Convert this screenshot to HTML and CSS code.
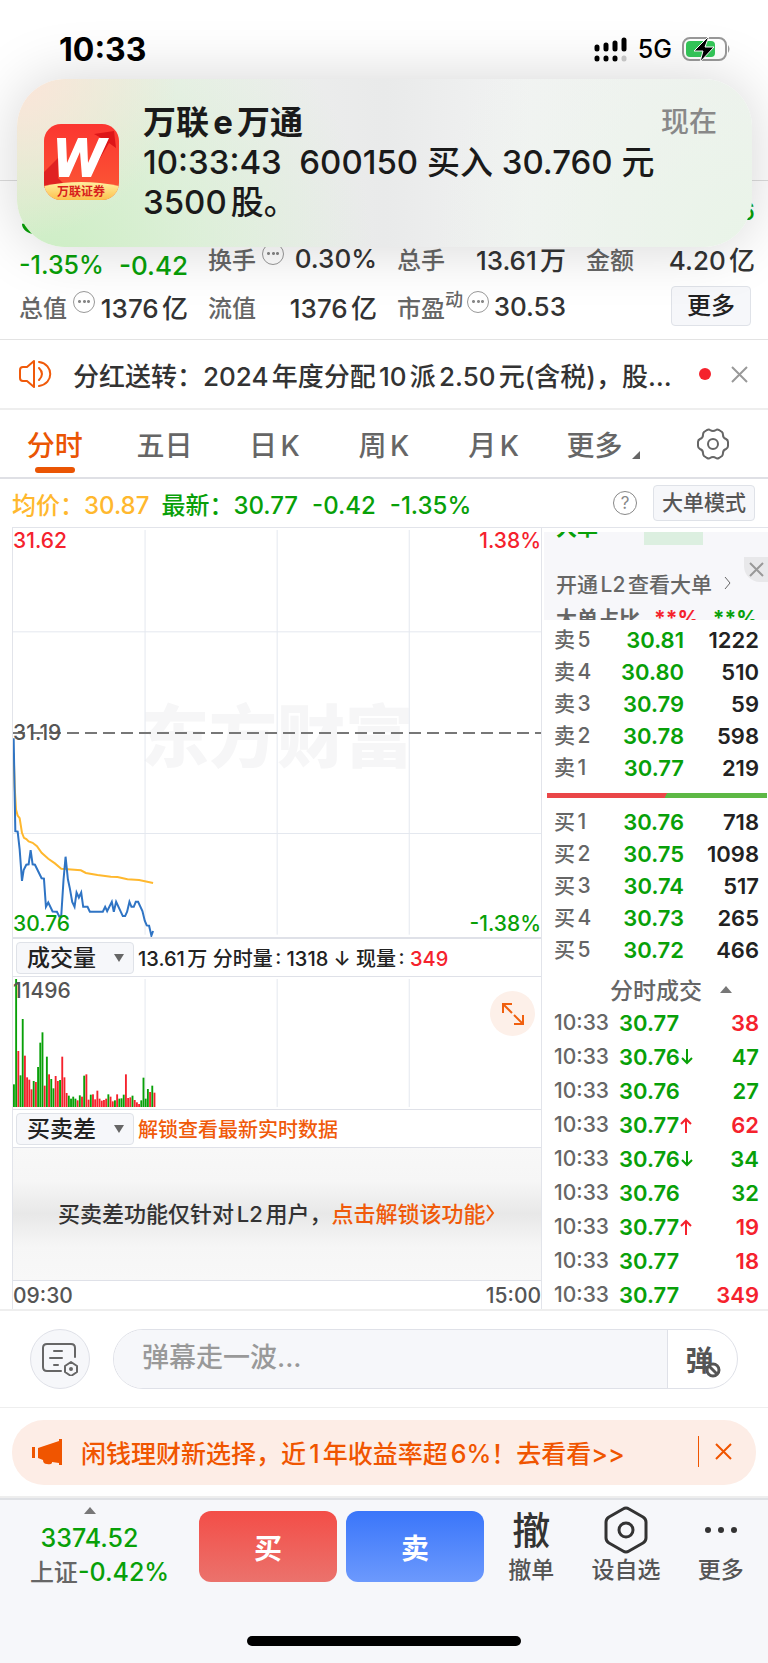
FILE: index.html
```html
<!DOCTYPE html>
<html lang="zh-CN">
<head>
    <meta charset="UTF-8">
    <meta name="viewport" content="width=device-width, initial-scale=1.0">
    <title>分时行情</title>
    <link rel="stylesheet" href="styles.css">
</head>
<body>
    <header class="top">
        <div class="status">
            <span class="clock">10:33</span>
            <span class="status-right">
                <svg width="34" height="26" viewBox="0 0 34 26">
                    <g stroke="#000" stroke-width="5" stroke-linecap="round">
                        <path d="M3 11v2M12 9v4M21 7v6M30 4v9M3 22v1M12 22v1M21 22v1"/>
                        <path d="M30 22v1" stroke="#ccc"/>
                    </g>
                </svg>
                <span class="net">5G</span>
                <svg width="50" height="28" viewBox="0 0 50 28">
                    <rect x="1" y="3" width="43" height="22" rx="7" fill="#fff" stroke="#999" stroke-width="2"/>
                    <rect x="4" y="6" width="29" height="16" rx="4" fill="#34c759"/>
                    <path d="M46 10q3 4 0 8z" fill="#999"/>
                    <path d="M27 1L12 16h9l-3 11 14-15h-9z" fill="#000" stroke="#fff" stroke-width="1"/>
                </svg>
            </span>
        </div>
    </header>

    <section class="notification">
        <svg class="app-icon" width="75" height="76" viewBox="0 0 75 76">
            <defs>
                <linearGradient id="appRed" x1="0" y1="0" x2="0" y2="1">
                    <stop offset="0" stop-color="#fb3530"/>
                    <stop offset="1" stop-color="#fb5a35"/>
                </linearGradient>
                <linearGradient id="appGold" x1="0" y1="0" x2="0" y2="1">
                    <stop offset="0" stop-color="#fff0a0"/>
                    <stop offset="1" stop-color="#fcc04c"/>
                </linearGradient>
                <clipPath id="appClip"><rect width="75" height="76" rx="17"/></clipPath>
            </defs>
            <g clip-path="url(#appClip)">
                <rect width="75" height="76" fill="url(#appRed)"/>
                <path d="M0 48l14-14v20l10 10H0z" fill="#e02222"/>
                <path d="M50 10l20-3 2 17-7-5-20 34-6-4 20-34z" fill="#dd1518"/>
                <path d="M13 14h9l1 25 11-25h9l1 25 11-25h10L47 53h-9l-2-25-11 25h-10z" fill="#fff"/>
                <path d="M0 62q37-8 75 0v14H0z" fill="url(#appGold)"/>
                <text x="37" y="72" text-anchor="middle" class="app-name">万联证券</text>
            </g>
        </svg>
        <div class="note-body">
            <div class="note-head"><strong>万联e万通</strong><time>现在</time></div>
            <p>10:33:43&nbsp; 600150 买入 30.760 元 3500股。</p>
        </div>
    </section>

    <main>
        <section class="summary">
            <div class="price-row"><span class="big-price">30.77</span><span class="side-price">30.76</span></div>
            <div class="stats">
                <div class="stat green change"><span>-1.35%</span><b>-0.42</b></div>
                <div class="stat first"><span>换手<i class="more-dot"></i></span><b>0.30%</b></div>
                <div class="stat first"><span>总手</span><b>13.61万</b></div>
                <div class="stat first"><span>金额</span><b>4.20亿</b></div>
                <div class="stat"><span>总值<i class="more-dot"></i></span><b>1376亿</b></div>
                <div class="stat"><span>流值</span><b>1376亿</b></div>
                <div class="stat"><span>市盈<sup>动</sup><i class="more-dot tight"></i></span><b>30.53</b></div>
                <div class="stat end"><button class="box-btn big">更多</button></div>
            </div>
        </section>

        <section class="notice">
            <svg width="34" height="28" viewBox="0 0 34 28" fill="none" stroke="#f05a0a" stroke-width="2" stroke-linejoin="round" stroke-linecap="round">
                <path d="M15 1L8 7H4Q1 7 1 10v8q0 3 3 3h4l7 6z"/>
                <path d="M20 8q6 6 0 12M20 2c15 2 15 22 0 24"/>
            </svg>
            <a href="#">分红送转：2024年度分配10派2.50元(含税)，股…</a>
            <span class="red-dot"></span>
            <button class="icon-btn" aria-label="关闭">
                <svg width="17" height="17" viewBox="0 0 17 17" stroke="#999" stroke-width="2"><path d="M1 1l15 15M16 1L1 16"/></svg>
            </button>
        </section>

        <nav class="tabs">
            <a href="#" class="active">分时</a>
            <a href="#">五日</a>
            <a href="#">日K</a>
            <a href="#">周K</a>
            <a href="#">月K</a>
            <a href="#" class="with-corner">更多<i class="corner"></i></a>
            <a href="#" aria-label="设置">
                <svg width="34" height="32" viewBox="0 0 34 32" fill="none" stroke="#666" stroke-width="2" stroke-linejoin="round">
                    <path d="M11 2q2-1 3 0 3 2 6 0 1-1 3 0l3 2q1 1 1 3 0 3 3 4 2 1 2 3v4q0 2-2 3-3 1-3 4 0 2-1 3l-3 2q-2 1-3 0-3-2-6 0-1 1-3 0l-3-2q-1-1-1-3 0-3-3-4-2-1-2-3v-4q0-2 2-3 3-1 3-4 0-2 1-3z"/>
                    <circle cx="17" cy="16" r="5"/>
                </svg>
            </a>
        </nav>

        <div class="quote-line">
            <span class="avg">均价：30.87</span>
            <span class="green last">最新：30.77<span>-0.42</span><span>-1.35%</span></span>
            <span class="help">?</span>
            <button class="box-btn">大单模式</button>
        </div>

        <div class="board">
            <section class="charts">
                <div class="plot price-plot">
                    <div class="watermark">东方财富</div>
                    <svg viewBox="36 21 1587 1233" preserveAspectRatio="none">
                        <path class="grid-line" d="M433 27V1247M830 27V1247M1227 27V1247M36 334H1623M36 942H1623"/>
                        <path class="mid-line" d="M36 639H1623"/>
                        <polyline class="avg-line" points="38,700 41,800 45,870 50,888 56,896 63,940 69,955 76,959 83,966 95,970 108,980 122,1000 142,1018 162,1032 181,1048 240,1053 255,1061 290,1067 330,1072 350,1073 380,1080 415,1082 457,1091"/>
                        <polyline class="price-line" points="38,655 43,935 50,936 56,990 63,1085 68,1052 76,1036 83,1035 89,992 95,1035 102,1036 122,1077 129,1078 135,1163 142,1150 155,1177 168,1178 175,1192 181,1190 188,1080 194,1012 201,1080 207,1108 214,1148 221,1163 227,1120 234,1135 241,1120 247,1163 260,1163 267,1178 306,1178 313,1163 319,1176 333,1148 339,1178 346,1148 366,1191 373,1191 379,1178 386,1148 392,1163 399,1163 405,1148 412,1148 425,1176 432,1205 438,1219 445,1220 452,1250 457,1236"/>
                    </svg>
                    <span class="tag tl red">31.62</span>
                    <span class="tag tr red">1.38%</span>
                    <span class="tag ml">31.19</span>
                    <span class="tag bl green">30.76</span>
                    <span class="tag br green">-1.38%</span>
                </div>
                <div class="plot-head">
                    <button class="picker">成交量<i></i></button>
                    <span>13.61万 分时量: 1318 ↓ 现量: <span class="red">349</span></span>
                </div>
                <div class="plot volume-plot">
                    <svg id="volume" viewBox="36 141 1587 396" preserveAspectRatio="none">
                        <path class="grid-line" d="M433 147V531M830 147V531M1227 147V531"/>
                    </svg>
                    <span class="tag tl">11496</span>
                    <button class="expand" aria-label="放大">
                        <svg width="24" height="24" viewBox="0 0 24 24" fill="none" stroke="#f0600f" stroke-width="2"><path d="M2 11V2h9M2 2l9 9M22 13v9h-9M22 22l-9-9"/></svg>
                    </button>
                </div>
                <div class="plot-head">
                    <button class="picker">买卖差<i></i></button>
                    <a href="#" class="orange">解锁查看最新实时数据</a>
                </div>
                <div class="plot locked">
                    <p>买卖差功能仅针对L2用户，<a href="#" class="orange">点击解锁该功能<svg width="9" height="18" viewBox="0 0 9 18" fill="none" stroke="#f05a0a" stroke-width="2"><path d="M1 1l6 8-6 8"/></svg></a></p>
                </div>
                <div class="axis"><span>09:30</span><span>15:00</span></div>
            </section>

            <aside class="orders">
                <div class="l2">
                    <div class="l2-top"><b class="green">大单</b><i></i></div>
                    <a href="#">开通L2查看大单<svg width="8" height="14" viewBox="0 0 8 14" fill="none" stroke="#666" stroke-width="1"><path d="M1 1l5 6-5 6"/></svg></a>
                    <div class="l2-ratio"><b>大单占比</b><b class="red">**%</b><b class="green">**%</b></div>
                    <button class="l2-close" aria-label="关闭">
                        <svg width="15" height="15" viewBox="0 0 15 15" stroke="#999" stroke-width="2"><path d="M1 1l13 13M14 1L1 14"/></svg>
                    </button>
                </div>
                <table class="book">
                    <tr><th>卖5</th><td class="green">30.81</td><td>1222</td></tr>
                    <tr><th>卖4</th><td class="green">30.80</td><td>510</td></tr>
                    <tr><th>卖3</th><td class="green">30.79</td><td>59</td></tr>
                    <tr><th>卖2</th><td class="green">30.78</td><td>598</td></tr>
                    <tr><th>卖1</th><td class="green">30.77</td><td>219</td></tr>
                </table>
                <div class="ratio-bar"></div>
                <table class="book">
                    <tr><th>买1</th><td class="green">30.76</td><td>718</td></tr>
                    <tr><th>买2</th><td class="green">30.75</td><td>1098</td></tr>
                    <tr><th>买3</th><td class="green">30.74</td><td>517</td></tr>
                    <tr><th>买4</th><td class="green">30.73</td><td>265</td></tr>
                    <tr><th>买5</th><td class="green">30.72</td><td>466</td></tr>
                </table>
                <div class="ticks-title">分时成交<i class="up-tri"></i></div>
                <table class="ticks">
                    <tr><th>10:33</th><td class="green">30.77</td><td class="red">38</td></tr>
                    <tr><th>10:33</th><td class="green">30.76<svg class="arrow" viewBox="0 0 13 16"><path d="M6 0v14M1 9l5 5 5-5"/></svg></td><td class="green">47</td></tr>
                    <tr><th>10:33</th><td class="green">30.76</td><td class="green">27</td></tr>
                    <tr><th>10:33</th><td class="green">30.77<svg class="arrow red" viewBox="0 0 13 16"><path d="M6 16V2M1 7l5-5 5 5"/></svg></td><td class="red">62</td></tr>
                    <tr><th>10:33</th><td class="green">30.76<svg class="arrow" viewBox="0 0 13 16"><path d="M6 0v14M1 9l5 5 5-5"/></svg></td><td class="green">34</td></tr>
                    <tr><th>10:33</th><td class="green">30.76</td><td class="green">32</td></tr>
                    <tr><th>10:33</th><td class="green">30.77<svg class="arrow red" viewBox="0 0 13 16"><path d="M6 16V2M1 7l5-5 5 5"/></svg></td><td class="red">19</td></tr>
                    <tr><th>10:33</th><td class="green">30.77</td><td class="red">18</td></tr>
                    <tr><th>10:33</th><td class="green">30.77</td><td class="red">349</td></tr>
                </table>
            </aside>
        </div>

        <form class="comment">
            <button type="button" class="round-btn" aria-label="弹幕设置">
                <svg width="38" height="34" viewBox="0 0 38 34" fill="none" stroke="#666" stroke-width="2" stroke-linecap="round">
                    <path d="M20 29H6q-4 0-4-4V6q0-4 4-4h24q4 0 4 4v9M13 9h8M9 16h12M13 23h4"/>
                    <path d="M30 20l6 4v6l-6 4-6-4v-6z" stroke-linejoin="round"/>
                    <circle cx="30" cy="27" r="1"/>
                </svg>
            </button>
            <div class="field">
                <input type="text" aria-label="弹幕" placeholder="弹幕走一波...">
                <button type="button" class="danmu" aria-label="关闭弹幕">弹<svg width="16" height="16" viewBox="0 0 16 16"><circle cx="8" cy="8" r="6" fill="#fff" stroke="#555" stroke-width="3"/><path d="M4 4l8 8" stroke="#555" stroke-width="3"/></svg></button>
            </div>
        </form>

        <div class="promo-wrap">
            <div class="promo">
                <svg width="31" height="26" viewBox="0 0 31 26" fill="#f05500"><path d="M0 8h3v11H0zM6 9L27 2V0h3v26h-3v-2l-7-1v1q-1 2-5 1-4 0-4-4l-5-2z"/></svg>
                <a href="#">闲钱理财新选择，近1年收益率超6%！去看看&gt;&gt;</a>
                <button class="icon-btn" aria-label="关闭">
                    <svg width="17" height="17" viewBox="0 0 17 17" stroke="#f05500" stroke-width="2"><path d="M1 1l15 15M16 1L1 16"/></svg>
                </button>
            </div>
        </div>
    </main>

    <footer class="bottom">
        <div class="actions">
            <div class="index">
                <i class="up-tri"></i>
                <b class="green">3374.52</b>
                <span>上证<b class="green">-0.42%</b></span>
            </div>
            <div class="trade">
                <button class="buy">买</button>
                <button class="sell">卖</button>
            </div>
            <div class="links">
                <a href="#"><span class="glyph">撤</span>撤单</a>
                <a href="#"><svg width="44" height="48" viewBox="0 0 44 48" fill="none" stroke="#333" stroke-width="3" stroke-linejoin="round"><path d="M19 3q3-2 6 0l14 8q3 2 3 5v16q0 3-3 5l-14 8q-3 2-6 0L5 37q-3-2-3-5V16q0-3 3-5z"/><circle cx="22" cy="24" r="7"/></svg>设自选</a>
                <a href="#"><svg width="44" height="48" viewBox="0 0 44 48" fill="#333"><circle cx="9" cy="24" r="3"/><circle cx="22" cy="24" r="3"/><circle cx="35" cy="24" r="3"/></svg>更多</a>
            </div>
        </div>
        <div class="home-bar"></div>
    </footer>
    <script src="script.js"></script>
</body>
</html>
```
FILE: styles.css
```css
* {
    box-sizing: border-box;
}
body {
    margin: 0;
    background: #fff;
    color: #333;
    font-family: Inter, "Noto Sans CJK SC", sans-serif;
    font-size: 24px;
    font-weight: 500;
    text-autospace: normal;
}
a {
    color: inherit;
    text-decoration: none;
}
button, input {
    font: inherit;
    color: inherit;
    border: 0;
    padding: 0;
    background: none;
}
b {
    font-weight: 500;
}
i {
    font-style: normal;
}
svg {
    display: block;
}
.green {
    color: #08a008;
}
.red {
    color: #f5222d;
}
.orange {
    color: #f05a0a;
}

/* status bar */
.top {
    height: 181px;
    border-bottom: 1px solid #ddd;
}
.status {
    display: flex;
    justify-content: space-between;
    align-items: center;
    padding: 32px 36px 0 59px;
    height: 66px;
    color: #000;
}
.clock {
    font-size: 32px;
    font-weight: 700;
}
.status-right {
    display: flex;
    align-items: center;
    gap: 10px;
}
.net {
    font-size: 25px;
}

/* push notification */
.notification {
    position: absolute;
    top: 79px;
    left: 17px;
    right: 16px;
    min-height: 168px;
    display: flex;
    align-items: center;
    gap: 24px;
    padding: 20px 35px 22px 27px;
    border-radius: 48px;
    background:
        radial-gradient(circle at 0 0, #fce5d9 0, rgba(252, 229, 217, 0) 160px),
        radial-gradient(circle at 5% 110%, #cdeec5 0, rgba(205, 238, 197, 0) 320px),
        radial-gradient(circle at 100% 100%, #e9f4e8 0, rgba(233, 244, 232, 0) 320px),
        linear-gradient(90deg, #f2f0e8 0, #f0f1f0 22%, #e9eaea 50%, #f2f3f3 70%, #f1f1f1 100%);
    box-shadow: 0 0 60px rgba(0, 0, 0, 0.17);
    color: #1a1a1a;
}
.app-icon {
    flex: none;
}
.app-name {
    font-size: 12px;
    font-weight: 700;
    fill: #d8201c;
}
.note-body {
    flex: 1;
    font-size: 33px;
    line-height: 40px;
}
.note-head {
    display: flex;
    justify-content: space-between;
}
.note-head time {
    color: #888;
    font-size: 28px;
}
.note-body p {
    margin: 0;
    max-width: 540px;
}

/* summary */
.summary {
    padding: 0 13px 10px 19px;
    border-bottom: 1px solid #e3e3e3;
}
.price-row {
    display: flex;
    justify-content: space-between;
    height: 56px;
    color: #08a008;
}
.big-price {
    font-size: 52px;
    line-height: 70px;
}
.side-price {
    line-height: 62px;
}
.stats {
    display: grid;
    grid-template-columns: repeat(4, 1fr);
    column-gap: 20px;
}
.stat {
    display: flex;
    justify-content: space-between;
    align-items: center;
    height: 46px;
    white-space: nowrap;
}
.stat b {
    font-size: 26px;
}
.stat > span {
    display: flex;
    align-items: center;
    color: #666;
}
.stat.change > span {
    color: inherit;
    font-size: 25px;
}
.change {
    padding-top: 10px;
}
.stat.first {
    padding-bottom: 4px;
}
.stat.end {
    justify-content: flex-end;
    padding-right: 4px;
}
.stat sup {
    font-size: 18px;
    line-height: 18px;
    margin-bottom: 12px;
}
.more-dot {
    width: 22px;
    height: 22px;
    margin: 0 0 9px 6px;
    border: 1px solid #999;
    border-radius: 50%;
    background: radial-gradient(circle, #888 1px, transparent 2px) center / 5px 5px no-repeat,
        radial-gradient(circle, #888 1px, transparent 2px) 3px center / 5px 5px no-repeat,
        radial-gradient(circle, #888 1px, transparent 2px) 12px center / 5px 5px no-repeat;
}
.more-dot.tight {
    margin-left: 4px;
}
.box-btn {
    height: 36px;
    padding: 0 8px;
    border: 1px solid #dfe2e8;
    border-radius: 4px;
    background: #f6f7fa;
    color: #555;
    font-size: 21px;
    line-height: 32px;
}
.box-btn.big {
    height: 40px;
    padding: 0 15px;
    color: #222;
    font-size: 24px;
}

/* notice */
.notice {
    display: flex;
    align-items: center;
    height: 70px;
    padding: 0 20px 0 19px;
    border-bottom: 2px solid #eee;
    font-size: 26px;
}
.notice a {
    flex: 1;
    margin-left: 20px;
    white-space: nowrap;
}
.red-dot {
    width: 12px;
    height: 12px;
    margin-right: 20px;
    border-radius: 50%;
    background: #f5222d;
}

/* tabs */
.tabs {
    display: grid;
    grid-template-columns: repeat(7, 1fr);
    height: 69px;
    border-bottom: 2px solid #dfe0e5;
    color: #666;
    font-size: 28px;
}
.tabs a {
    position: relative;
    display: flex;
    justify-content: center;
    align-items: center;
}
.tabs .active {
    color: #ea5504;
}
.tabs .active::after {
    content: "";
    position: absolute;
    bottom: 4px;
    width: 40px;
    height: 6px;
    border-radius: 3px;
    background: #ea5504;
}
.corner {
    margin: 22px 0 0 10px;
    border-left: 8px solid transparent;
    border-bottom: 8px solid #666;
}

.quote-line {
    display: flex;
    align-items: center;
    height: 48px;
    padding: 0 13px 0 12px;
    font-size: 24px;
}
.avg {
    color: #ffb82e;
}
.last {
    margin-left: 12px;
}
.last span {
    margin-left: 14px;
}
.help {
    width: 24px;
    height: 24px;
    margin: 0 16px 0 auto;
    border: 1px solid #888;
    border-radius: 50%;
    color: #888;
    font-size: 17px;
    font-weight: 400;
    line-height: 22px;
    text-align: center;
}

/* charts */
.board {
    display: flex;
    height: 784px;
    overflow: hidden;
    padding-left: 12px;
    border-bottom: 2px solid #eee;
}
.charts {
    flex: 1;
    min-width: 0;
    border: 1px solid #e2e4ea;
    border-width: 1px 1px 0;
    font-size: 20px;
    color: #555;
}
.plot {
    position: relative;
    border-bottom: 1px solid #dfe1e8;
}
.plot > svg {
    position: relative;
    width: 100%;
    height: 100%;
}
.price-plot {
    height: 411px;
    border-bottom-width: 2px;
}
.grid-line, .mid-line, .avg-line, .price-line {
    fill: none;
    vector-effect: non-scaling-stroke;
}
.grid-line {
    stroke: #e4e8ef;
    stroke-width: 1px;
}
.mid-line {
    stroke: #777;
    stroke-width: 2px;
    stroke-dasharray: 12 6;
}
.avg-line {
    stroke: #ffb82e;
    stroke-width: 2px;
}
.price-line {
    stroke: #2f74c4;
    stroke-width: 2px;
}
.watermark {
    position: absolute;
    inset: 0;
    display: flex;
    justify-content: center;
    align-items: center;
    color: #f6f6f7;
    font-size: 68px;
    font-weight: 900;
}
.tag {
    position: absolute;
    font-size: 21px;
    line-height: 24px;
}
.tl {
    top: 1px;
    left: 0;
}
.tr {
    top: 1px;
    right: 0;
}
.ml {
    top: 193px;
    left: 0;
}
.bl {
    bottom: 1px;
    left: 0;
}
.br {
    bottom: 1px;
    right: 0;
}
.plot-head {
    display: flex;
    align-items: center;
    gap: 4px;
    height: 38px;
    padding-left: 3px;
    border-bottom: 1px solid #dfe1e8;
    color: #222;
    white-space: nowrap;
}
.plot-head .orange {
    color: #f05a0a;
}
.picker {
    display: flex;
    align-items: center;
    justify-content: space-between;
    width: 118px;
    height: 32px;
    padding: 0 9px 0 10px;
    border: 1px solid #dfe2e8;
    border-radius: 4px;
    background: #f6f7fa;
    font-size: 23px;
    line-height: 28px;
}
.picker i {
    border: 5px solid transparent;
    border-top: 8px solid #666;
    border-bottom: 0;
}
.volume-plot {
    height: 133px;
}
.volume-plot .tl {
    top: 2px;
}
.expand {
    position: absolute;
    top: 14px;
    right: 6px;
    display: grid;
    place-items: center;
    width: 45px;
    height: 45px;
    border-radius: 50%;
    background: #fdf0e9;
}
.locked {
    display: flex;
    align-items: center;
    height: 133px;
    padding: 0 0 4px 45px;
    background: linear-gradient(#f8f8f8 0, #f6f6f6 25%, #e8e8e8 50%, #f6f6f6 75%, #f8f8f8 100%);
    color: #333;
    font-size: 22px;
    white-space: nowrap;
}
.locked p {
    margin: 0;
}
.locked svg {
    display: inline-block;
}
.axis {
    display: flex;
    justify-content: space-between;
    font-size: 21px;
    line-height: 30px;
}

/* order book */
.orders {
    width: 226px;
    border-top: 1px solid #e2e4ea;
}
.l2 {
    position: relative;
    height: 88px;
    margin: 4px 0 0 2px;
    padding-left: 12px;
    overflow: hidden;
    background: #f7f7fa;
    color: #666;
    font-size: 21px;
}
.l2-top {
    display: flex;
    align-items: flex-end;
    height: 13px;
}
.l2-top b {
    height: 26px;
    margin-bottom: 4px;
    font-weight: 700;
    line-height: 26px;
}
.l2-top i {
    width: 59px;
    height: 13px;
    margin-left: 46px;
    background: #dcefe0;
}
.l2 a {
    display: flex;
    align-items: center;
    gap: 12px;
    height: 28px;
    margin-top: 24px;
}
.l2-ratio {
    display: flex;
    gap: 14px;
    margin-top: 8px;
    line-height: 28px;
}
.l2-ratio b {
    font-weight: 700;
}
.l2-close {
    position: absolute;
    top: 25px;
    right: 0;
    display: grid;
    place-items: center;
    width: 24px;
    height: 25px;
    border-bottom-left-radius: 16px;
    background: #e8e8ea;
}
table {
    width: 100%;
    border-collapse: collapse;
    font-size: 22px;
}
th, td {
    height: 32px;
    padding: 0;
    font-weight: 600;
    line-height: 28px;
    text-align: right;
}
th {
    width: 68px;
    padding-left: 12px;
    color: #666;
    font-size: 21px;
    font-weight: 500;
    text-align: left;
}
td:last-child {
    padding-right: 9px;
    text-align: right;
}
.book {
    margin-top: 4px;
    color: #222;
}
.book td:nth-child(2) {
    width: 74px;
}
.ratio-bar {
    height: 5px;
    margin: 9px 1px 0 5px;
    background: linear-gradient(120deg, #ea4648 54%, #5db845 54%);
}
.ratio-bar + .book {
    margin-top: 8px;
}
.ticks-title {
    display: flex;
    align-items: center;
    justify-content: center;
    gap: 18px;
    height: 40px;
    padding: 6px 0 0 32px;
    color: #666;
    font-size: 23px;
}
.up-tri {
    border: 6px solid transparent;
    border-top: 0;
    border-bottom: 7px solid #777;
}
.ticks th, .ticks td {
    height: 34px;
}
.ticks th {
    width: 77px;
}
.ticks td:nth-child(2) {
    text-align: left;
}
.arrow {
    display: inline-block;
    width: 13px;
    height: 16px;
    margin-left: 1px;
    fill: none;
    stroke: currentColor;
    stroke-width: 2px;
}

/* comment box */
.comment {
    display: flex;
    gap: 23px;
    padding: 18px 30px 18px;
    border-bottom: 1px solid #eee;
}
.round-btn {
    display: grid;
    place-items: center;
    width: 60px;
    height: 60px;
    border: 1px solid #dfe1e8;
    border-radius: 50%;
    background: #f6f7fa;
}
.field {
    display: flex;
    flex: 1;
    height: 60px;
    border: 1px solid #dfe1e8;
    border-radius: 30px;
    overflow: hidden;
}
.field input {
    flex: 1;
    min-width: 0;
    padding: 0 0 4px 28px;
    background: #f6f7fa;
    font-size: 27px;
    text-autospace: no-autospace;
}
.field input::placeholder {
    color: #999;
}
.danmu {
    position: relative;
    width: 70px;
    padding-right: 6px;
    border-left: 1px solid #dfe1e8;
    color: #555;
    font-size: 28px;
    font-weight: 700;
}
.danmu svg {
    position: absolute;
    right: 16px;
    bottom: 10px;
}

/* promo */
.promo-wrap {
    padding: 12px 12px 11px;
    border-bottom: 2px solid #eee;
}
.promo {
    display: flex;
    align-items: center;
    height: 65px;
    padding: 0 24px 2px 20px;
    border-radius: 32px;
    background: #fdede6;
    color: #f05500;
    font-size: 25px;
}
.promo a {
    flex: 1;
    margin-left: 18px;
    white-space: nowrap;
}
.promo .icon-btn {
    padding: 7px 0 7px 16px;
    border-left: 1px solid #f05500;
}

/* bottom bar */
.bottom {
    padding-bottom: 17px;
    border-top: 2px solid #dfe1e5;
    background: #f6f7fa;
}
.actions {
    display: flex;
    height: 136px;
}
.index {
    display: flex;
    flex-direction: column;
    align-items: center;
    width: 199px;
    padding-top: 7px;
    color: #666;
    line-height: 34px;
}
.index b {
    font-size: 25px;
}
.index > b {
    margin: 7px 20px 0 0;
}
.index .up-tri {
    margin-right: 20px;
}
.trade {
    display: flex;
    flex: 1;
    gap: 9px;
    padding-top: 11px;
}
.trade button {
    flex: 1;
    height: 71px;
    border-radius: 12px;
    color: #fff;
    font-size: 28px;
    font-weight: 700;
}
.buy {
    background: linear-gradient(#f34e48, #eb726c);
}
.sell {
    background: linear-gradient(#3a76fa, #6c99fd);
}
.links {
    display: grid;
    grid-template-columns: repeat(3, 1fr);
    width: 284px;
    padding-top: 6px;
    color: #555;
    font-size: 23px;
    line-height: 32px;
}
.links a {
    display: flex;
    flex-direction: column;
    align-items: center;
}
.glyph {
    color: #333;
    font-size: 38px;
    line-height: 48px;
}
.home-bar {
    width: 274px;
    height: 10px;
    margin: 0 auto;
    border-radius: 5px;
    background: #000;
}
```
FILE: script.js
```js
// one entry per minute: colour + top of the bar in svg units
const bars = ('g463 g147 r363 g436 g267 r377 r442 r449 r478 g453 r456 g411 g338 g307 r467 g380 r433 g447 g475 ' +
    'r438 r453 g450 r380 r442 r489 g497 g506 g500 g506 r511 g496 r500 g437 r433 r509 g494 r493 r508 r482 r506 ' +
    'r512 r510 r506 g493 r500 r514 g511 r493 g506 g505 g494 r433 r504 r502 g497 r510 r517 r522 g511 g443 g506 ' +
    'g477 r486 g467 r488').split(' ');
const svg = document.getElementById('volume');

bars.forEach((bar, i) => {
    const top = parseInt(bar.slice(1));
    const rect = document.createElementNS('http://www.w3.org/2000/svg', 'rect');
    rect.setAttribute('x', 36 + i * 6.6);
    rect.setAttribute('y', top);
    rect.setAttribute('width', 5.6);
    rect.setAttribute('height', 531 - top);
    rect.setAttribute('fill', bar[0] === 'g' ? '#08a008' : '#f5222d');
    svg.appendChild(rect);
});
```
